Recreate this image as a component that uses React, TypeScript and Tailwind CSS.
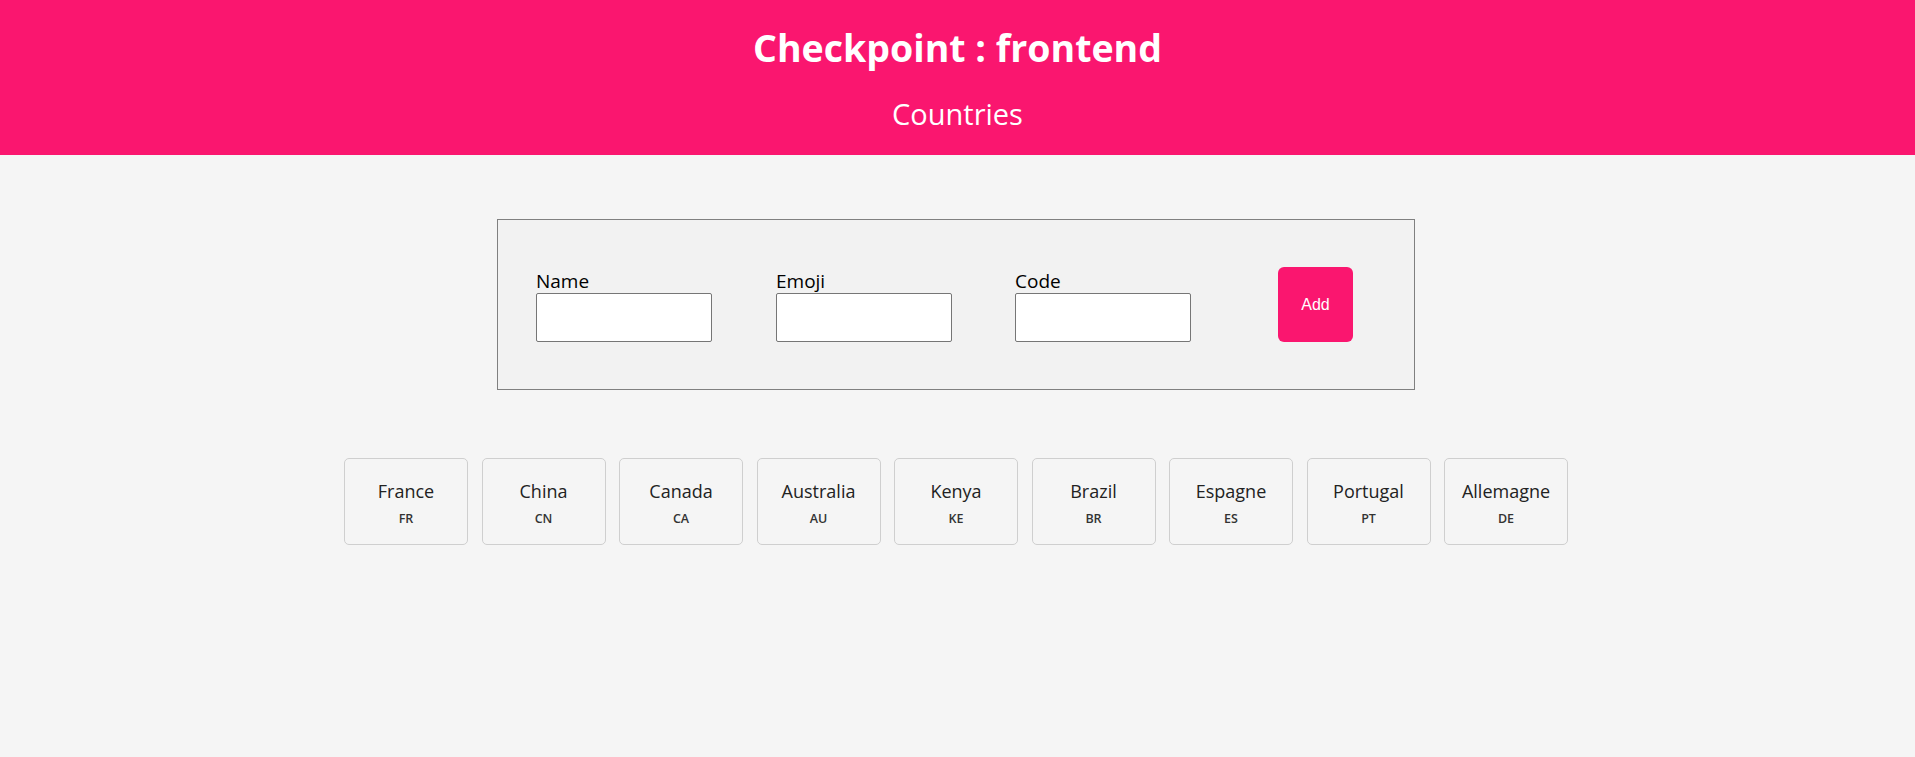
import React from "react";

const countries = [
  { name: "France", code: "FR" },
  { name: "China", code: "CN" },
  { name: "Canada", code: "CA" },
  { name: "Australia", code: "AU" },
  { name: "Kenya", code: "KE" },
  { name: "Brazil", code: "BR" },
  { name: "Espagne", code: "ES" },
  { name: "Portugal", code: "PT" },
  { name: "Allemagne", code: "DE" },
];

function Field({ label }: { label: string }) {
  return (
    <div className="flex flex-col w-[176px]">
      <label className="text-[19px] leading-[24px] text-black">{label}</label>
      <input className="h-[49px] w-[176px] bg-white border border-[#767676] rounded-[2px] outline-none" />
    </div>
  );
}

export default function App() {
  return (
    <div className="min-h-screen bg-[#f5f5f5] font-['Open_Sans',sans-serif]">
      <header className="h-[155px] bg-[#fa166f] flex flex-col items-center text-white">
        <h1 className="mt-[25px] text-[37.5px] leading-[46px] font-bold">Checkpoint : frontend</h1>
        <h2 className="mt-[26px] text-[29px] leading-[34px] font-normal">Countries</h2>
      </header>

      <div className="flex justify-center mt-[64px]">
        <form
          className="w-[918px] h-[171px] mr-[3px] bg-[#f2f2f2] border border-[#808080] flex items-end pl-[38px] pb-[47px]"
          onSubmit={(e) => e.preventDefault()}
        >
          <Field label="Name" />
          <div className="ml-[64px]">
            <Field label="Emoji" />
          </div>
          <div className="ml-[63px]">
            <Field label="Code" />
          </div>
          <button
            type="submit"
            className="ml-[87px] w-[75px] h-[75px] rounded-[6px] bg-[#fa166f] text-white text-[16px] font-['Liberation_Sans',Arial,sans-serif]"
          >
            Add
          </button>
        </form>
      </div>

      <div className="flex justify-center gap-[13.5px] mt-[68px] mr-[3px]">
        {countries.map((c) => (
          <div
            key={c.code}
            className="w-[124px] h-[87px] border border-[#cfcfcf] rounded-[5px] flex flex-col items-center pt-[21px] text-[#222]"
          >
            <div className="text-[18px] leading-[22px]">{c.name}</div>
            <div className="mt-[9px] text-[12.5px] leading-[16px] font-semibold text-[#333]">{c.code}</div>
          </div>
        ))}
      </div>
    </div>
  );
}
